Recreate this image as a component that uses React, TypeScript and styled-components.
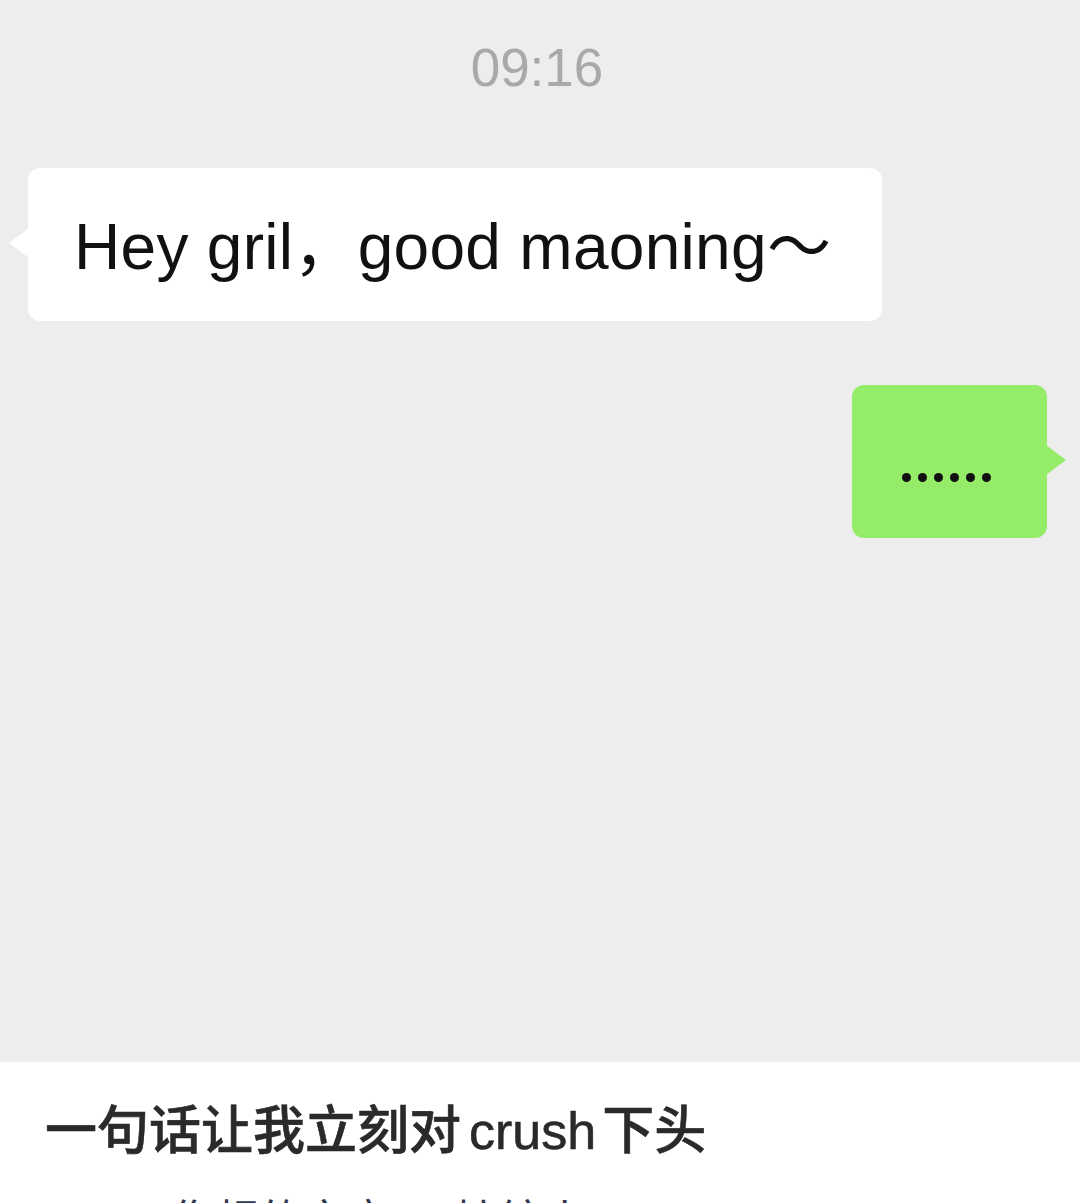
import React from "react";
import styled, { createGlobalStyle } from "styled-components";

const Global = createGlobalStyle`
  html, body { margin: 0; padding: 0; background: #ffffff; }
  body { font-family: "Liberation Sans", "Noto Sans CJK SC", sans-serif; overflow: hidden; }
`;

const Page = styled.div`
  width: 1080px;
  height: 1203px;
  display: flex;
  flex-direction: column;
  overflow: hidden;
`;

const Chat = styled.div`
  height: 1062px;
  flex-shrink: 0;
  background: #ededed;
  display: flex;
  flex-direction: column;
  box-sizing: border-box;
  padding-top: 38px;
`;

const Time = styled.div`
  text-align: center;
  font-size: 53px;
  line-height: 60px;
  color: #a9a9a9;
  font-family: "Liberation Sans", "Noto Sans", sans-serif;
  padding-right: 6px;
`;

const Row = styled.div<{ $side: "left" | "right"; $top: number }>`
  display: flex;
  justify-content: ${(p) => (p.$side === "left" ? "flex-start" : "flex-end")};
  margin-top: ${(p) => p.$top}px;
  padding: ${(p) => (p.$side === "left" ? "0 0 0 28px" : "0 33px 0 0")};
`;

const Bubble = styled.div<{ $side: "left" | "right" }>`
  position: relative;
  box-sizing: border-box;
  height: 153px;
  border-radius: 12px;
  display: flex;
  align-items: center;
  background: ${(p) => (p.$side === "left" ? "#ffffff" : "#95ec69")};
  width: ${(p) => (p.$side === "left" ? "854px" : "195px")};
  padding: ${(p) => (p.$side === "left" ? "0 0 8px 46px" : "0 0 0 50px")};
  &::before {
    content: "";
    position: absolute;
    top: 60px;
    ${(p) => (p.$side === "left" ? "left: -19px;" : "right: -19px;")}
    border-top: 15px solid transparent;
    border-bottom: 15px solid transparent;
    ${(p) =>
      p.$side === "left"
        ? "border-right: 20px solid #ffffff;"
        : "border-left: 20px solid #95ec69;"}
  }
`;

const MsgText = styled.span`
  font-size: 64px;
  color: #111111;
  font-family: "Liberation Sans", "Noto Sans CJK SC", sans-serif;
  white-space: nowrap;
  letter-spacing: 0.3px;
`;

const Dots = styled.div`
  display: flex;
  gap: 7px;
  padding-top: 32px;
`;

const Dot = styled.span`
  width: 9px;
  height: 9px;
  border-radius: 50%;
  background: #111;
`;

const Article = styled.div`
  flex: 1;
  background: #ffffff;
  padding: 37px 0 0 45px;
  display: flex;
  flex-direction: column;
`;

const Title = styled.h1`
  margin: 0;
  font-family: "Liberation Sans", "Noto Sans CJK SC", sans-serif;
  font-weight: 500;
  font-size: 52px;
  line-height: 64px;
  color: #2a2a2a;
  letter-spacing: 0;
  word-spacing: 0;
  white-space: nowrap;
  -webkit-text-stroke: 0.6px #2a2a2a;
`;

const Latin = styled.span`
  padding: 0 6px 0 8px;
`;

const Meta = styled.div`
  margin-top: 30px;
  padding-left: 72px;
  font-family: "Noto Sans CJK SC", sans-serif;
  font-size: 44px;
  line-height: 50px;
  color: #2e3650;
  white-space: nowrap;
`;

export default function App() {
  return (
    <Page>
      <Global />
      <Chat>
        <Time>09:16</Time>
        <Row $side="left" $top={70}>
          <Bubble $side="left">
            <MsgText>Hey gril，good maoning～</MsgText>
          </Bubble>
        </Row>
        <Row $side="right" $top={64}>
          <Bubble $side="right">
            <Dots>
              {Array.from({ length: 6 }).map((_, i) => (
                <Dot key={i} />
              ))}
            </Dots>
          </Bubble>
        </Row>
      </Chat>
      <Article>
        <Title>
          一句话让我立刻对<Latin>crush</Latin>下头
        </Title>
        <Meta>· 佟超的文章 · 拙编小</Meta>
      </Article>
    </Page>
  );
}
